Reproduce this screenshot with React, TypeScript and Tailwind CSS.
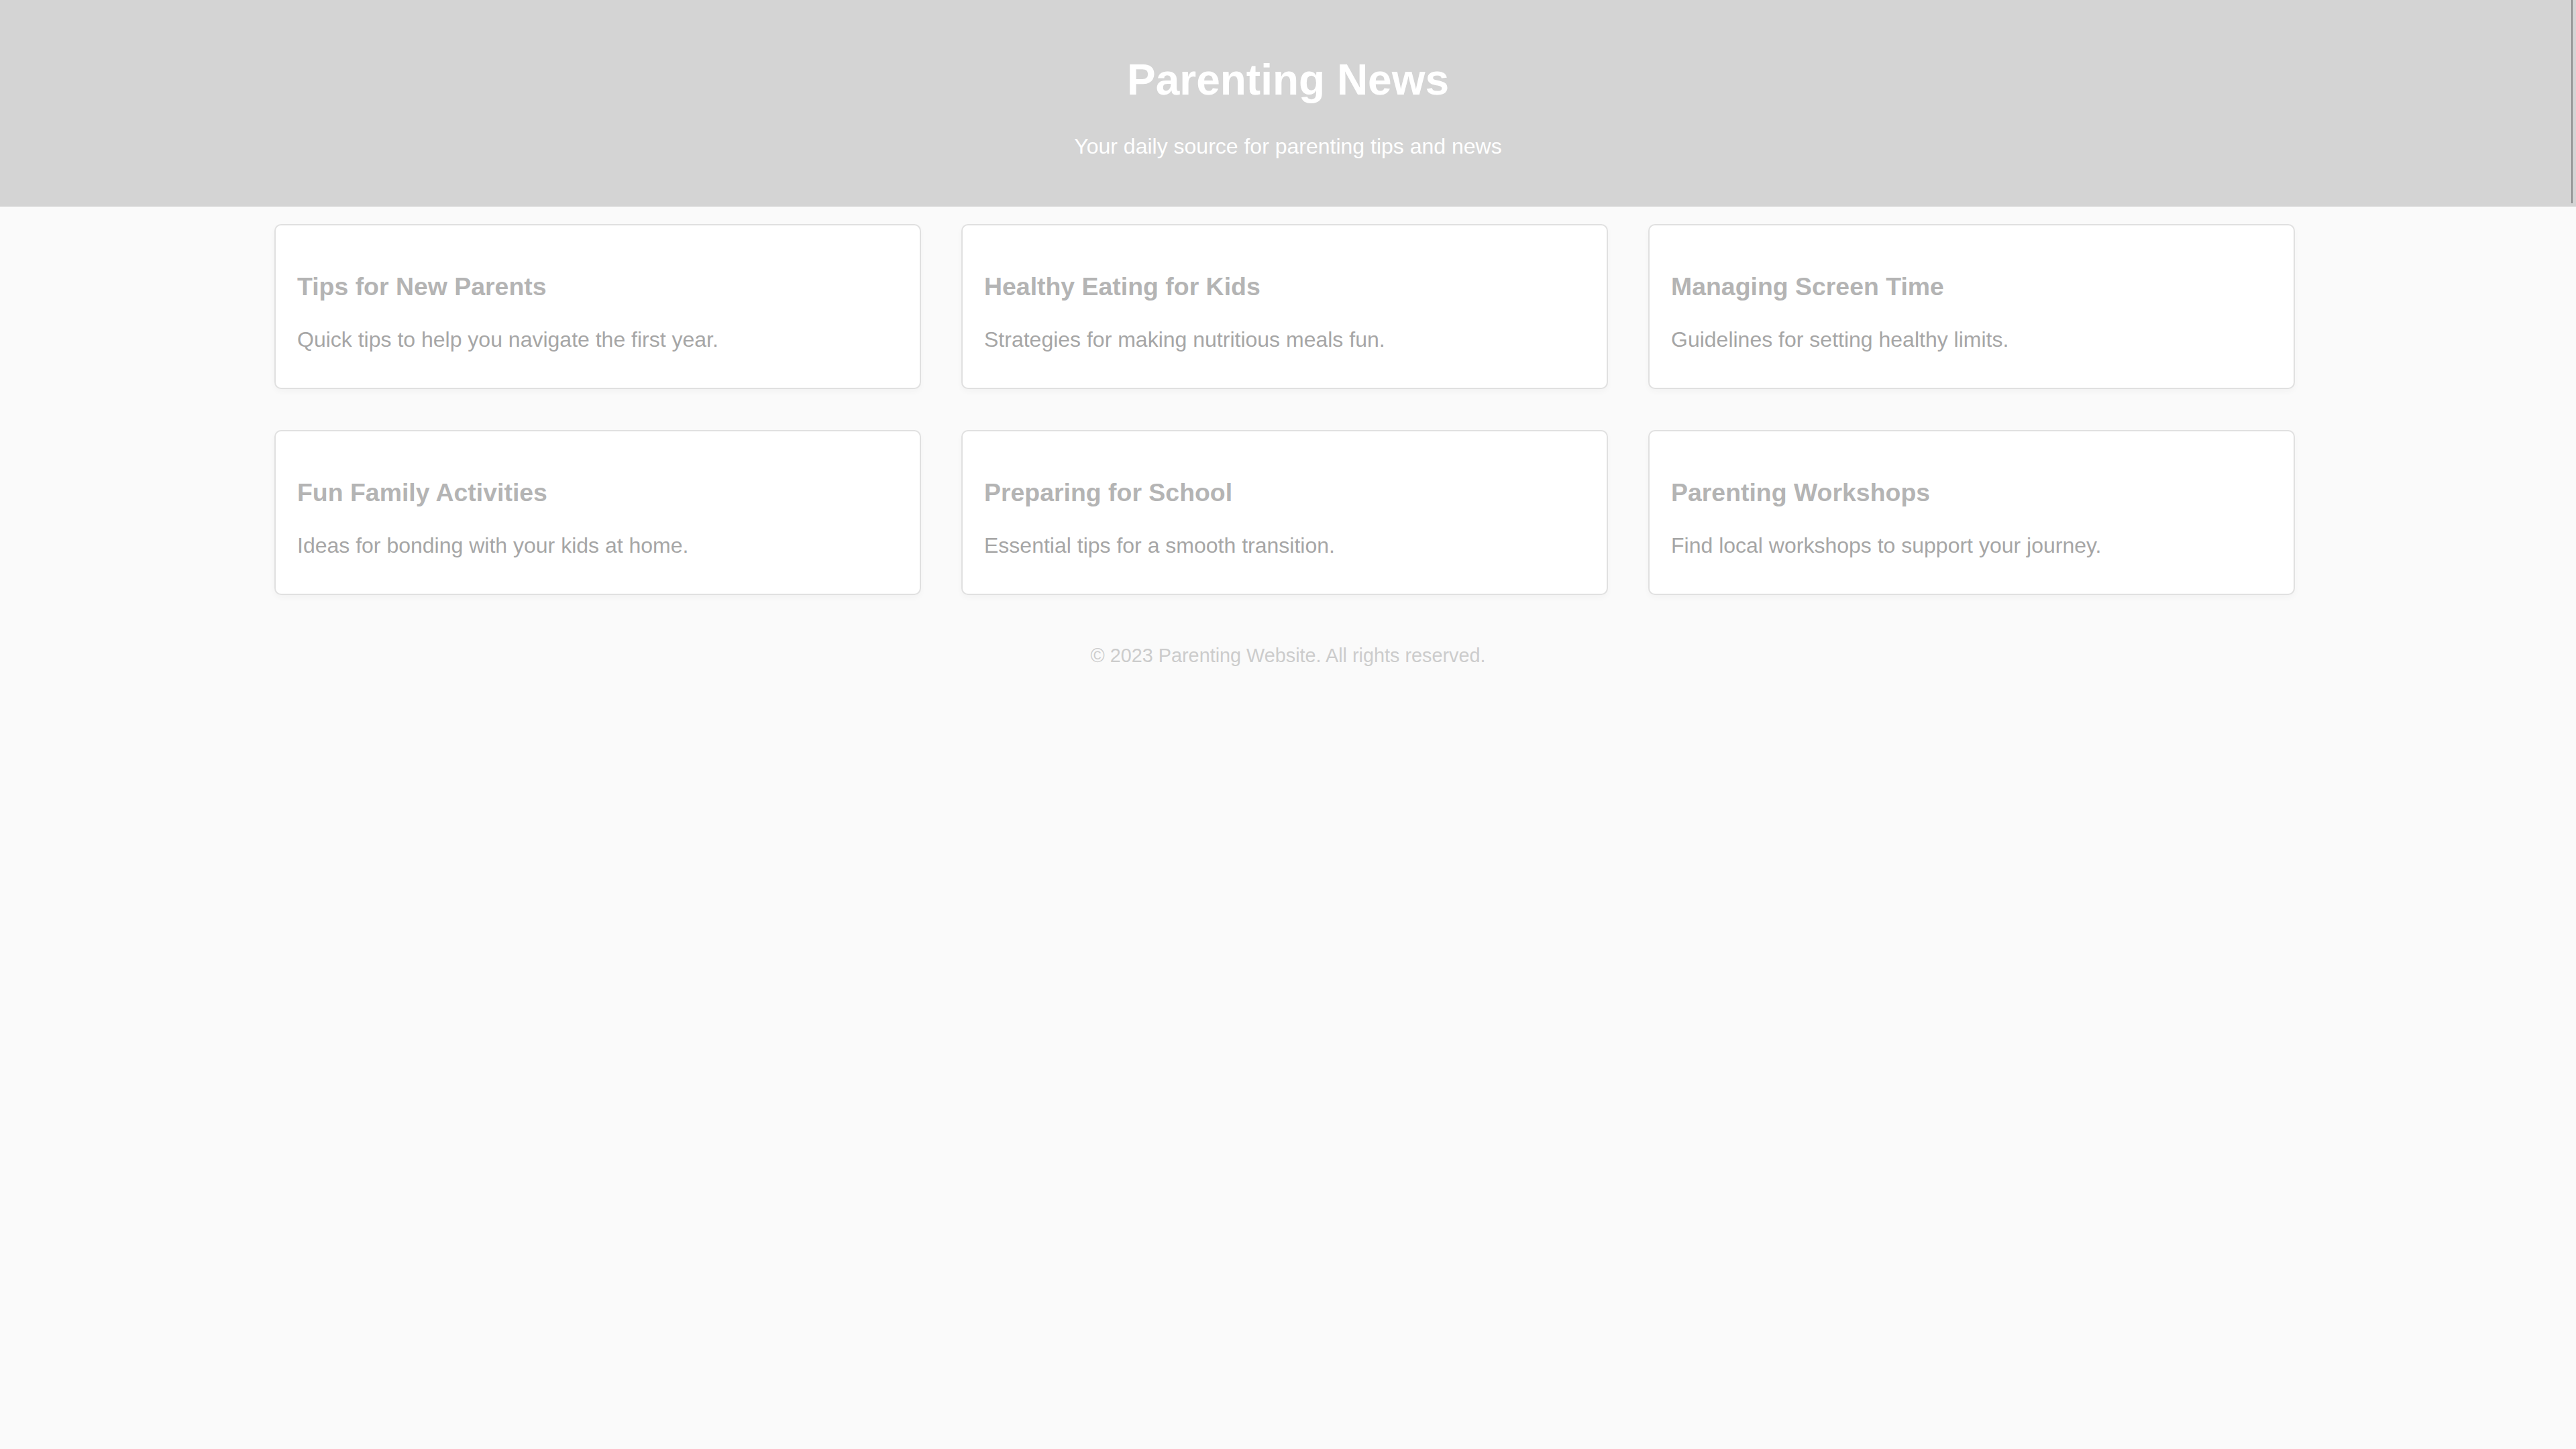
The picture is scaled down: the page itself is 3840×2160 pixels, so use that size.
const articles = [
  { title: "Tips for New Parents", text: "Quick tips to help you navigate the first year." },
  { title: "Healthy Eating for Kids", text: "Strategies for making nutritious meals fun." },
  { title: "Managing Screen Time", text: "Guidelines for setting healthy limits." },
  { title: "Fun Family Activities", text: "Ideas for bonding with your kids at home." },
  { title: "Preparing for School", text: "Essential tips for a smooth transition." },
  { title: "Parenting Workshops", text: "Find local workshops to support your journey." },
];

function ArticleCard({ title, text }: { title: string; text: string }) {
  return (
    <div className="h-[246px] bg-white border-2 border-[#e0e0e0] rounded-[10px] shadow-[0_4px_10px_rgba(0,0,0,0.03)] px-[32px] pt-[32px]">
      <h3 className="mt-[38px] text-[37.44px] leading-[43px] font-bold text-[#b4b4b4]">
        {title}
      </h3>
      <p className="mt-[39px] text-[32px] leading-[37px] text-[#a6a6a6]">{text}</p>
    </div>
  );
}

export default function App() {
  return (
    <div className="min-h-screen bg-[#fafafa] font-['Liberation_Sans',Arial,sans-serif]">
      <header className="relative h-[308px] bg-[#d4d4d4] text-center text-white pt-[83px]">
        <h1 className="text-[64px] leading-[73.5px] font-bold">Parenting News</h1>
        <p className="mt-[43px] text-[32px] leading-[37px]">
          Your daily source for parenting tips and news
        </p>
        <div className="absolute right-[5px] top-0 h-[303px] w-[2px] bg-[#8a8a8a]" />
      </header>

      <main className="ml-[409px] w-[3012px] pt-[26px]">
        <div className="grid grid-cols-3 gap-x-[60px] gap-y-[61px]">
          {articles.map((a) => (
            <ArticleCard key={a.title} title={a.title} text={a.text} />
          ))}
        </div>
      </main>

      <footer className="mt-[74px] text-center text-[28.8px] leading-[33px] text-[#cccccc]">
        © 2023 Parenting Website. All rights reserved.
      </footer>
    </div>
  );
}
